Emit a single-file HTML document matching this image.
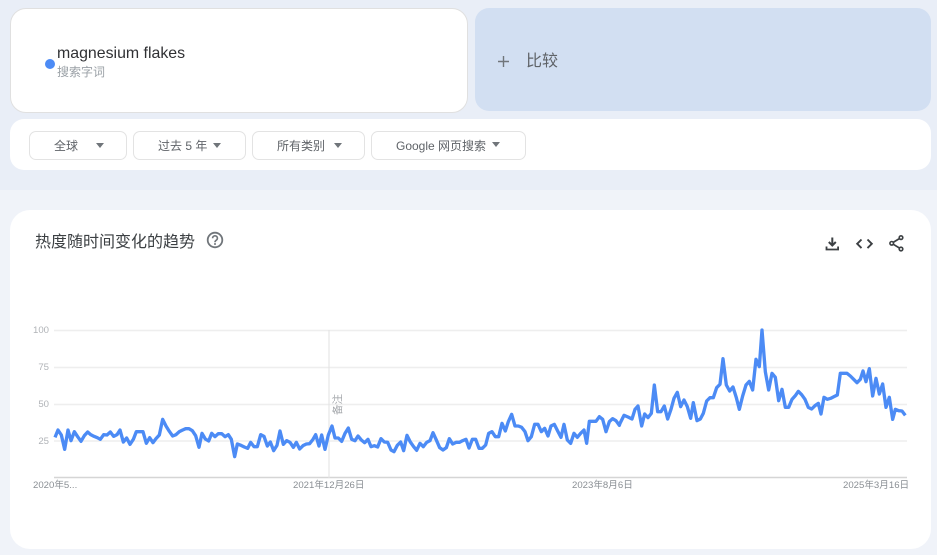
<!DOCTYPE html>
<html><head><meta charset="utf-8">
<style>
html,body{margin:0;padding:0;width:937px;height:555px;overflow:hidden;background:#f0f3f9;font-family:"Liberation Sans","Noto Sans CJK SC",sans-serif}
.abs{position:absolute}
.t{position:absolute;white-space:nowrap;line-height:1}
.btn{position:absolute;top:131px;height:27px;border:1px solid #e3e3e3;border-radius:7px;background:#fff;box-sizing:content-box}
.btn span{position:absolute;top:7px;font-size:12px;line-height:14px;color:#5f6368;white-space:nowrap}
.btn i{position:absolute;top:11px;width:0;height:0;border-left:4.500px solid transparent;border-right:4.500px solid transparent;border-top:5px solid #70757a}
</style></head><body>
<div class="abs" style="left:0;top:0;width:937px;height:190px;background:#e9eef7"></div>
<div class="abs" style="left:10px;top:8px;width:456px;height:103px;background:#fff;border:1px solid #e0e0e0;border-radius:16px"></div>
<div class="abs" style="left:45px;top:59px;width:10px;height:10px;border-radius:50%;background:#4c8bf5"></div>
<div class="t" style="left:57px;top:46px;font-size:15.900px;color:#303134">magnesium flakes</div>
<div class="t" style="left:57px;top:66px;font-size:12px;color:#9aa0a6">搜索字词</div>
<div class="abs" style="left:475px;top:8px;width:456px;height:103px;background:#d2dff2;border-radius:14px"></div>
<svg class="abs" style="left:497px;top:55px" width="13" height="13"><path d="M6.500 1v11M1 6.500h11" stroke="#70757a" stroke-width="1.400" fill="none"/></svg>
<div class="t" style="left:526px;top:54px;font-size:16px;color:#5f6368">比较</div>
<div class="abs" style="left:10px;top:119px;width:921px;height:51px;background:#fff;border-radius:14px"></div>
<div class="btn" style="left:29px;width:96px"><span style="left:24px">全球</span><i style="left:66px"></i></div>
<div class="btn" style="left:133px;width:111px"><span style="left:24px">过去 5 年</span><i style="left:79px"></i></div>
<div class="btn" style="left:252px;width:111px"><span style="left:24px">所有类别</span><i style="left:81px"></i></div>
<div class="btn" style="left:371px;width:153px"><span style="left:24px">Google 网页搜索</span><i style="left:120px;top:10px"></i></div>
<div class="abs" style="left:10px;top:210px;width:921px;height:339px;background:#fff;border-radius:20px"></div>
<div class="t" style="left:35px;top:235px;font-size:16px;color:#3c4043">热度随时间变化的趋势</div>
<svg class="abs" style="left:206px;top:231px" width="18" height="18" viewBox="0 0 18 18"><circle cx="9" cy="9" r="7.300" fill="none" stroke="#70757a" stroke-width="1.800"/><path d="M6.600 7.200a2.400 2.400 0 1 1 3.700 2c-.9.6-1.300 1-1.300 2" fill="none" stroke="#70757a" stroke-width="1.600"/><circle cx="9" cy="13" r="1" fill="#70757a"/></svg>
<svg class="abs" style="left:820px;top:232px" width="90" height="24" viewBox="0 0 90 24">
<path d="M12.300 5.500v8M8.800 10l3.500 3.500 3.500-3.500" fill="none" stroke="#3c4043" stroke-width="2"/>
<path d="M6.500 14.500v3h11.600v-3" fill="none" stroke="#3c4043" stroke-width="1.800"/>
<path d="M41.500 7.500l-4.300 4.300 4.300 4.300M47.500 7.500l4.300 4.300-4.300 4.300" fill="none" stroke="#3c4043" stroke-width="1.900"/>
<path d="M81 5.600l-9.300 5.700 9.300 5.700" fill="none" stroke="#3c4043" stroke-width="1.700"/>
<circle cx="81" cy="5.600" r="1.800" fill="#fff" stroke="#3c4043" stroke-width="1.600"/>
<circle cx="71.700" cy="11.300" r="1.800" fill="#fff" stroke="#3c4043" stroke-width="1.600"/>
<circle cx="81" cy="17" r="1.800" fill="#fff" stroke="#3c4043" stroke-width="1.600"/>
</svg>
<svg class="abs" style="left:0;top:0" width="937" height="555">
<g stroke="#eeeeee" stroke-width="1.500"><path d="M54 330.500H907M54 367.500H907M54 404.500H907M54 441H907"/></g>
<path d="M54 477.500H907" stroke="#d5d5d5" stroke-width="1.500"/>
<path d="M329 330V478" stroke="#e2e2e2" stroke-width="1"/>
<g fill="none" stroke="#4c8bf5" stroke-width="10" stroke-linejoin="round" stroke-linecap="butt">
<polyline transform="translate(20 320) scale(.33333)" points="105,352 114,330 124,345 134,388 144,330 153,362 163,335 173,350 183,364 193,347 203,336 212,344 222,349 232,353 241,358 251,344 261,345 271,336 281,349 291,344 300,330 310,366 320,354 330,373 340,358 349,335 359,335 369,335 379,370 389,353 399,368 408,356 418,345 428,298 438,318 448,334 458,348 468,344 478,335 488,330 497,326 507,326 517,332 527,347 537,382 546,340 556,357 566,363 575,340 585,350 595,341 605,341 615,350 625,344 634,358 644,410 652,372 663,376 673,381 683,385 692,367 702,380 712,380 722,344 732,349 742,378 751,366 761,392 771,376 780,333 790,373 800,362 810,367 820,382 829,367 839,387 849,377 859,372 869,371 879,358 887,344 897,378 905,345 915,388 925,345 936,318 945,354 955,354 965,364 975,340 985,324 995,358 1005,362 1014,348 1024,360 1034,368 1044,358 1053,380 1063,377 1073,381 1083,356 1093,366 1103,367 1113,390 1122,395 1132,376 1142,366 1151,392 1161,346 1171,366 1181,380 1190,391 1200,370 1210,380 1220,367 1230,362 1239,338 1249,360 1259,383 1269,390 1279,383 1288,356 1298,372 1308,367 1318,367 1328,362 1338,358 1347,384 1357,358 1367,358 1377,385 1387,385 1397,375 1406,340 1416,335 1426,350 1436,350 1446,310 1456,333 1465,305 1475,283 1485,318 1495,318 1505,322 1515,335 1524,362 1534,350 1544,313 1554,313 1564,335 1574,325 1584,348 1593,318 1603,313 1613,333 1623,352 1632,313 1642,360 1652,370 1662,340 1672,352 1682,340 1692,330 1700,370 1708,304 1718,304 1728,304 1738,290 1748,298 1758,335 1768,305 1778,296 1788,302 1798,316 1800,310 1812,286 1824,291 1836,297 1845,268 1854,258 1865,318 1874,282 1884,293 1894,280 1903,195 1913,275 1923,275 1933,258 1943,297 1953,268 1962,235 1972,217 1982,260 1992,240 2002,260 2012,295 2020,248 2031,302 2041,297 2050,280 2060,243 2070,233 2080,233 2090,203 2100,193 2109,116 2119,195 2129,213 2139,201 2149,233 2158,268 2168,228 2178,195 2188,184 2198,210 2208,118 2218,140 2226,30 2236,155 2246,210 2256,160 2266,172 2276,242 2286,208 2296,262 2306,262 2316,238 2326,227 2335,214 2345,224 2355,238 2365,262 2375,267 2385,257 2395,250 2403,282 2412,232 2422,238 2432,235 2442,230 2452,225 2461,160 2471,160 2481,160 2491,168 2501,178 2511,188 2521,178 2529,153 2538,185 2548,146 2558,228 2568,175 2578,222 2588,192 2598,262 2608,232 2618,298 2626,268 2636,272 2646,273 2656,286"/>
</g>
<g font-family="'Liberation Sans','Noto Sans CJK SC',sans-serif" font-size="9.600" fill="#b0b3b7">
<text x="49" y="333" text-anchor="end">100</text>
<text x="49" y="370" text-anchor="end">75</text>
<text x="49" y="407" text-anchor="end">50</text>
<text x="49" y="444" text-anchor="end">25</text>
</g>
<g font-family="'Liberation Sans','Noto Sans CJK SC',sans-serif" font-size="9.600" fill="#8a8f94">
<text x="33" y="488">2020年5...</text>
<text x="293" y="488">2021年12月26日</text>
<text x="572" y="488">2023年8月6日</text>
<text x="843" y="488">2025年3月16日</text>
</g>
<text transform="translate(341 415) rotate(-90)" font-family="'Liberation Sans','Noto Sans CJK SC',sans-serif" font-size="10.500" fill="#a5a8ac">备注</text>
</svg>
</body></html>
